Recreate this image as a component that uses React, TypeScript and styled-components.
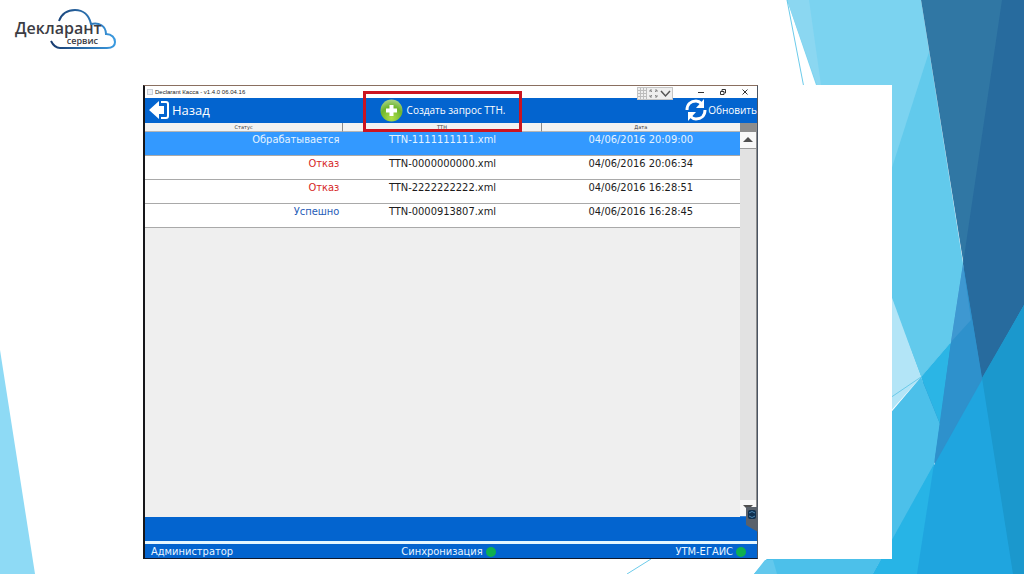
import React from "react";
import styled, { createGlobalStyle } from "styled-components";

const GlobalStyle = createGlobalStyle`
  *, *::before, *::after { box-sizing: border-box; }
  body { margin: 0; background: #fff; font-family: "Open Sans", "Noto Sans", sans-serif; }
  button { margin: 0; padding: 0; border: 0; background: none; color: inherit; font: inherit; }
`;

const Slide = styled.div`
  position: relative;
  display: flex;
  flex-direction: column;
  min-height: 100vh;
  padding-bottom: 15px;
  overflow: hidden;
`;

const Artwork = styled.svg`
  position: absolute;
  inset: 0;
  width: 100%;
  height: 100%;
`;

const Header = styled.header`
  position: relative;
  height: 85px;
  padding: 8px 15px;
`;

const Logo = styled.div`
  position: relative;
  width: 104px;
  height: 44px;
  color: #3c3c44;
`;

const LogoCloud = styled.svg`
  position: absolute;
  top: 0;
  left: 34px;
`;

const LogoName = styled.div`
  position: relative;
  padding-top: 12px;
  font: 600 16px/16px "Open Sans", sans-serif;
`;

const LogoSub = styled.div`
  position: relative;
  padding-right: 21px;
  font: 600 9px/10px "Open Sans", sans-serif;
  text-align: right;
`;

const Panel = styled.main`
  position: relative;
  display: flex;
  flex: 1;
  margin: 0 132px 0 143px;
  padding-right: 134px;
  background: #fff;
`;

const AppWindow = styled.section`
  position: relative;
  display: flex;
  flex: 1;
  flex-direction: column;
  border: solid;
  border-width: 1px 1px 1px 2px;
  border-color: #8a6f60 #4a5462 #10182c #16161a;
  background: #fff;
`;

const TitleBar = styled.div`
  display: flex;
  align-items: center;
  height: 12px;
  padding: 0 8px 0 2px;
  gap: 2px;
  background: #fff;
  color: #222;
  font: 6px/12px "Liberation Sans", sans-serif;
`;

const AppIcon = styled.span`
  width: 6px;
  height: 6px;
  border: 1px solid #c9ced6;
  background: #eef1f5;
`;

const Title = styled.span`
  flex: 1;
`;

const WindowButtons = styled.div`
  display: flex;
  gap: 14px;
`;

const WindowButton = styled.button`
  display: flex;
  width: 8px;
  height: 8px;
`;

const ViewerTools = styled.div`
  position: absolute;
  top: 1px;
  right: 84px;
  display: flex;
  align-items: center;
  width: 36px;
  height: 13px;
  border: 1px solid #c4c4c4;
  background: #efefef;
`;

const Toolbar = styled.div`
  display: grid;
  grid-template-columns: 1fr 1fr 1fr 17px;
  align-items: start;
  height: 25px;
  background: #0364cf;
  color: #fff;
`;

const ToolButton = styled.button<{ $size: number; $place: string; $gap: number }>`
  position: relative;
  display: flex;
  align-items: center;
  justify-self: ${(p) => p.$place};
  gap: ${(p) => p.$gap}px;
  height: 24px;
  font-size: ${(p) => p.$size}px;
  line-height: 22px;
  white-space: nowrap;
`;

const BackButton = styled(ToolButton)`
  padding-left: 4px;
`;

const RefreshButton = styled(ToolButton)`
  grid-column: 3 / 5;
`;

const CreateButton = styled(ToolButton)`
  &::after {
    content: "";
    position: absolute;
    z-index: 2;
    inset: -7px -17px -10px -17px;
    border: 3px solid #cb1420;
  }
`;

const Content = styled.div`
  display: flex;
  flex: 1;
  background: #efefef;
`;

const TableArea = styled.div`
  flex: 1;
`;

const Table = styled.table`
  width: 100%;
  border-collapse: separate;
  border-spacing: 0;
  table-layout: fixed;
`;

const HeadCell = styled.th`
  height: 9px;
  padding: 0;
  border-right: 1px solid #8b8b8b;
  border-bottom: 1px solid #b5b5b5;
  background: #f2f2f2;
  color: #333;
  font: 5px/8px "DejaVu Sans", sans-serif;
  text-align: center;

  &:last-child { border-right: 0; }
`;

const Row = styled.tr<{ $selected?: boolean }>`
  background: ${(p) => (p.$selected ? "#3399ff" : "#fff")};
  color: ${(p) => (p.$selected ? "#e4f3ff" : "#1c1c1c")};
`;

const Cell = styled.td<{ $align?: string; $color?: string }>`
  height: 24px;
  padding: 0 4px 7px;
  border-bottom: 1px solid #a9a9a9;
  color: ${(p) => p.$color ?? "inherit"};
  font: 11px/16px "DejaVu Sans Condensed", "DejaVu Sans", sans-serif;
  font-stretch: condensed;
  text-align: ${(p) => p.$align ?? "center"};
  white-space: nowrap;
`;

const ScrollBar = styled.div`
  display: flex;
  flex-direction: column;
  width: 17px;
  border-right: 1px solid #8f8f8f;
  background: #e2e2e2;
`;

const Corner = styled.div`
  height: 9px;
  background: #8d8d8d;
`;

const ScrollButton = styled.button`
  display: flex;
  align-items: center;
  justify-content: center;
  height: 17px;
  border-bottom: 1px solid #9b9b9b;
  background: #f8f8f8;
`;

const ScrollSpace = styled.div`
  flex: 1;
`;

const ScrollEnd = styled(ScrollButton)`
  border-bottom-color: #3d86d6;
`;

const ActionBar = styled.div`
  height: 24px;
  background: #0364cf;
`;

const StatusBar = styled.footer`
  display: grid;
  grid-template-columns: 1fr auto 1fr;
  align-items: end;
  height: 17px;
  padding: 0 11px 0 6px;
  border-top: 3px solid #e4f6ff;
  background: #0364cf;
  color: #e9f5ff;
  font: 11px/13px "DejaVu Sans Condensed", "DejaVu Sans", sans-serif;
  font-stretch: condensed;
`;

const StatusItem = styled.span<{ $end?: boolean }>`
  display: flex;
  align-items: center;
  justify-content: ${(p) => (p.$end ? "flex-end" : "flex-start")};
  gap: 3px;
`;

const Dot = styled.i`
  width: 10px;
  height: 10px;
  border-radius: 50%;
  background: #0fb04f;
`;

const Scanner = styled.svg`
  position: absolute;
  right: -1px;
  bottom: 26px;
`;

const rows = [
  { status: "Обрабатывается", file: "TTN-1111111111.xml", date: "04/06/2016 20:09:00", selected: true },
  { status: "Отказ", color: "#d61f26", file: "TTN-0000000000.xml", date: "04/06/2016 20:06:34" },
  { status: "Отказ", color: "#d61f26", file: "TTN-2222222222.xml", date: "04/06/2016 16:28:51" },
  { status: "Успешно", color: "#1f5cb8", file: "TTN-0000913807.xml", date: "04/06/2016 16:28:45" },
];

function Background() {
  return (
    <Artwork viewBox="0 0 1024 574" preserveAspectRatio="none" aria-hidden="true">
      <path d="M0 350L35 574H0Z" fill="#8edaf5" />
      <path d="M922 0H1024V574H875L935 464L922 377L952 342L964 264Z" fill="#2e91cc" />
      <path d="M787 0H921L963 264L951 342L921 377L816 85Z" fill="#7bd3f0" />
      <path d="M787 0H809L821 85H817Z" fill="#8bd7f1" />
      <path d="M929 52L963 264L951 342L921 377L880 270V205Z" fill="#62caec" />
      <path d="M880 265L921 377L880 423Z" fill="#b3e5f7" />
      <path d="M921 377L940 424L934 466L873 574H754Z" fill="#4cc0ea" />
      <path d="M951 342L921 377L940 424Z" fill="#2bb5e5" />
      <path d="M765 560H773L777 574H754Z" fill="#62c8ed" />
      <path d="M921 0H1024V305L982 378Z" fill="#3077a4" />
      <path d="M1002 0H1024V305L982 378L963 264Z" fill="#276b9e" />
      <path d="M963 264L982 378L934 464L951 342Z" fill="#2e91cc" />
      <path d="M963 264L971 320L951 342Z" fill="#3e98d1" />
      <path d="M1024 305L873 574H1024Z" fill="#1fa5df" />
      <path d="M934 464L917 574H873Z" fill="#27b4e6" />
      <path d="M1024 305L982 378L1013 574H1024Z" fill="#1b98cd" />
      <path d="M787 0L804 88M627 574L651 559M890 398L921 377" fill="none" stroke="#6ccbea" strokeWidth="1" />
    </Artwork>
  );
}

export default function App() {
  return (
    <>
      <GlobalStyle />
      <Slide>
        <Background />
        <Header>
          <Logo>
            <LogoCloud width="70" height="44" viewBox="0 0 70 44" fill="none" aria-hidden="true">
              <defs>
                <linearGradient id="cloud" x1="0" x2="1">
                  <stop offset="0" stopColor="#173a6e" />
                  <stop offset="1" stopColor="#3a9ae0" />
                </linearGradient>
              </defs>
              <path
                d="M10 13C13 5 19 2 26 2C34 2 40 7 42 16C50 14 57 18 57 26C63 26 66 30 66 34C66 38 63 40 58 40H11C7 40 4 37 2 33"
                stroke="url(#cloud)"
                strokeWidth="2"
              />
            </LogoCloud>
            <LogoName>Декларант</LogoName>
            <LogoSub>сервис</LogoSub>
          </Logo>
        </Header>
        <Panel>
          <AppWindow>
            <TitleBar>
              <AppIcon />
              <Title>Declarant Касса - v1.4.0 06.04.16</Title>
              <WindowButtons>
                <WindowButton aria-label="Свернуть">
                  <svg width="8" height="8" viewBox="0 0 8 8" stroke="#333"><path d="M1 4.500H7" /></svg>
                </WindowButton>
                <WindowButton aria-label="Развернуть">
                  <svg width="8" height="8" viewBox="0 0 8 8" fill="none" stroke="#333"><path d="M1.500 3.500H5V6.500H1.500ZM3 3V1.500H6.500V5H5.500" /></svg>
                </WindowButton>
                <WindowButton aria-label="Закрыть">
                  <svg width="8" height="8" viewBox="0 0 8 8" stroke="#333"><path d="M1.500 1.500L6.500 6.500M6.500 1.500L1.500 6.500" /></svg>
                </WindowButton>
              </WindowButtons>
            </TitleBar>
            <Toolbar>
              <BackButton $size={13} $place="start" $gap={2}>
                <svg width="21" height="20" viewBox="0 0 21 20" aria-hidden="true">
                  <path d="M0 10L10 1V6H15V14H10V19Z" fill="#fff" />
                  <path d="M12 2H17Q19 2 19 4V16Q19 18 17 18H12" fill="none" stroke="#fff" strokeWidth="2" />
                </svg>
                Назад
              </BackButton>
              <CreateButton $size={10} $place="center" $gap={4}>
                <svg width="23" height="23" viewBox="0 0 23 23" aria-hidden="true">
                  <defs>
                    <radialGradient id="plus" cx="0.5" cy="0.85" r="0.85">
                      <stop offset="0" stopColor="#b2e04a" />
                      <stop offset="0.6" stopColor="#6db52c" />
                      <stop offset="1" stopColor="#a9d489" />
                    </radialGradient>
                  </defs>
                  <circle cx="11.500" cy="11.500" r="11" fill="url(#plus)" />
                  <path d="M9.500 6H13.500V9.500H17V13.500H13.500V17H9.500V13.500H6V9.500H9.500Z" fill="#fff" />
                </svg>
                Создать запрос ТТН.
              </CreateButton>
              <RefreshButton $size={10} $place="end" $gap={1}>
                <svg width="22" height="22" viewBox="0 0 22 22" aria-hidden="true">
                  <path d="M2 11C2 5 6 2 11 2C14 2 15 3 17 5" fill="none" stroke="#fff" strokeWidth="3" />
                  <path d="M19 0V9H11Z" fill="#fff" />
                  <path d="M20 11C20 17 16 20 11 20C8 20 7 19 5 17" fill="none" stroke="#fff" strokeWidth="3" />
                  <path d="M3 22V13H11Z" fill="#fff" />
                </svg>
                Обновить
              </RefreshButton>
            </Toolbar>
            <Content>
              <TableArea>
                <Table>
                  <thead>
                    <tr>
                      <HeadCell>Статус</HeadCell>
                      <HeadCell>ТТН</HeadCell>
                      <HeadCell>Дата</HeadCell>
                    </tr>
                  </thead>
                  <tbody>
                    {rows.map((row) => (
                      <Row key={row.file} $selected={row.selected}>
                        <Cell $align="right" $color={row.color}>{row.status}</Cell>
                        <Cell>{row.file}</Cell>
                        <Cell>{row.date}</Cell>
                      </Row>
                    ))}
                  </tbody>
                </Table>
              </TableArea>
              <ScrollBar>
                <Corner />
                <ScrollButton aria-label="Вверх">
                  <svg width="10" height="6" viewBox="0 0 10 6"><path d="M0 5L5 0L10 5Z" fill="#505050" /></svg>
                </ScrollButton>
                <ScrollSpace />
                <ScrollEnd aria-label="Вниз">
                  <svg width="10" height="6" viewBox="0 0 10 6"><path d="M0 0H10L5 5Z" fill="#505050" /></svg>
                </ScrollEnd>
              </ScrollBar>
            </Content>
            <ActionBar />
            <StatusBar>
              <StatusItem>Администратор</StatusItem>
              <StatusItem>Синхронизация<Dot /></StatusItem>
              <StatusItem $end>УТМ-ЕГАИС<Dot /></StatusItem>
            </StatusBar>
            <ViewerTools>
              <svg width="34" height="11" viewBox="0 0 34 11" fill="none" aria-hidden="true">
                <path d="M0 2.500H9M0 5.500H9M0 8.500H9M2.500 0V11M5.500 0V11M8.500 0V11" stroke="#bcbcbc" />
                <path d="M12 4V2H14M17 2H19V4M19 7V9H17M14 9H12V7M12 2L14 4M19 2L17 4M19 9L17 7M12 9L14 7" stroke="#8a8a8a" />
                <path d="M23 3L27.500 8L32 3" stroke="#555" strokeWidth="1.500" />
              </svg>
            </ViewerTools>
            <Scanner width="13" height="26" viewBox="0 0 13 26" aria-hidden="true">
              <path d="M1 1H13V26L6 22L1 19Z" fill="#59616b" />
              <rect x="3" y="4" width="8" height="9" rx="2" fill="#10304f" />
              <path d="M4 7Q7 4 10 7M4 10Q7 13 10 10" fill="none" stroke="#4b87b4" />
            </Scanner>
          </AppWindow>
        </Panel>
      </Slide>
    </>
  );
}
